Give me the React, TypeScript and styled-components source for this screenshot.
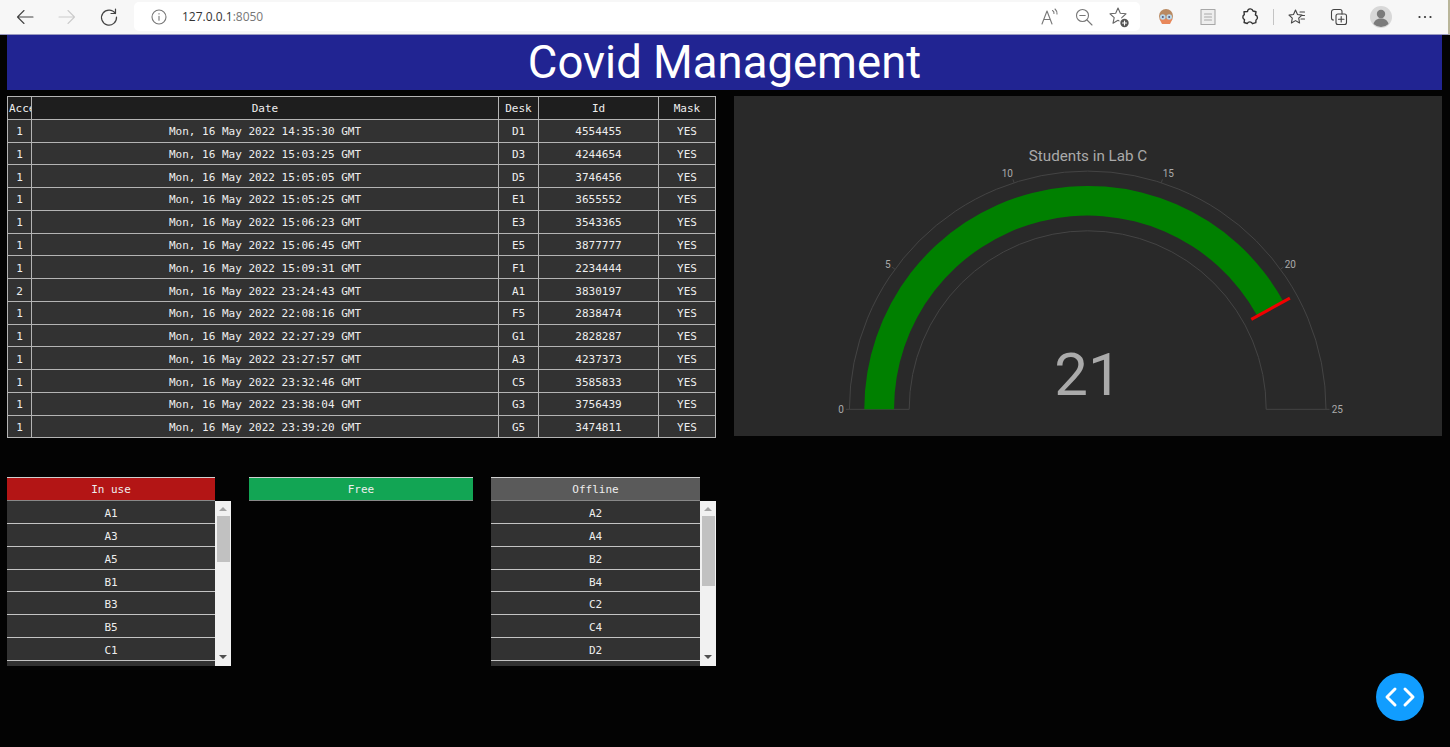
import React from 'react';
import styled, {createGlobalStyle} from 'styled-components';

const GlobalStyle = createGlobalStyle`
    html, body {
        margin: 0;
        padding: 0;
        height: 100%;
        background: #030303;
        overflow: hidden;
    }
    #root {
        height: 100%;
    }
`

type LogRow = [string, string, string, string]

const logRows: LogRow[] = [
    ['1', 'Mon, 16 May 2022 14:35:30 GMT', 'D1', '4554455'],
    ['1', 'Mon, 16 May 2022 15:03:25 GMT', 'D3', '4244654'],
    ['1', 'Mon, 16 May 2022 15:05:05 GMT', 'D5', '3746456'],
    ['1', 'Mon, 16 May 2022 15:05:25 GMT', 'E1', '3655552'],
    ['1', 'Mon, 16 May 2022 15:06:23 GMT', 'E3', '3543365'],
    ['1', 'Mon, 16 May 2022 15:06:45 GMT', 'E5', '3877777'],
    ['1', 'Mon, 16 May 2022 15:09:31 GMT', 'F1', '2234444'],
    ['2', 'Mon, 16 May 2022 23:24:43 GMT', 'A1', '3830197'],
    ['1', 'Mon, 16 May 2022 22:08:16 GMT', 'F5', '2838474'],
    ['1', 'Mon, 16 May 2022 22:27:29 GMT', 'G1', '2828287'],
    ['1', 'Mon, 16 May 2022 23:27:57 GMT', 'A3', '4237373'],
    ['1', 'Mon, 16 May 2022 23:32:46 GMT', 'C5', '3585833'],
    ['1', 'Mon, 16 May 2022 23:38:04 GMT', 'G3', '3756439'],
    ['1', 'Mon, 16 May 2022 23:39:20 GMT', 'G5', '3474811'],
]

const inUse = ['A1', 'A3', 'A5', 'B1', 'B3', 'B5', 'C1', 'C3', 'C5', 'D1', 'D3', 'D5', 'E1', 'E3', 'E5', 'F1', 'F3', 'F5', 'G1', 'G3', 'G5']
const offline = ['A2', 'A4', 'B2', 'B4', 'C2', 'C4', 'D2', 'D4', 'E2', 'E4', 'F2', 'F4', 'G2', 'G4']

const Toolbar = styled.div`
    height: 35px;
    padding-bottom: 1px;
    box-sizing: border-box;
    background: #f7f7f7;
    border-bottom: 1px solid #9a9ac0;
    border-right: 2px solid #b9b69a;
    display: flex;
    align-items: center;
    color: #444;
`

const NavGroup = styled.div`
    width: 134px;
    flex: none;
    display: flex;
    align-items: center;
    padding-left: 13px;
    gap: 18px;
    box-sizing: border-box;
`

const ToolIcon = styled.svg<{$tone?: string; $weight?: number}>`
    width: 24px;
    height: 24px;
    flex: none;
    fill: none;
    stroke: ${props => props.$tone || '#555'};
    stroke-width: ${props => props.$weight || 1.1};
    stroke-linecap: round;
    stroke-linejoin: round;
`

const AddressBar = styled.div`
    width: 1006px;
    height: 29px;
    flex: none;
    background: #fff;
    border-radius: 5px;
    display: flex;
    align-items: center;
    padding: 0 9px 0 13px;
    box-sizing: border-box;
`

const Url = styled.div`
    margin-left: 11px;
    font: 12px "Open Sans", sans-serif;
    color: #333;
    flex: 1;
    span {
        color: #777;
    }
`

const AddressActions = styled.div`
    display: flex;
    align-items: center;
    gap: 11px;
`

const ToolGroup = styled.div`
    flex: 1;
    display: flex;
    align-items: center;
    padding-left: 14px;
    gap: 18px;
`

const Separator = styled.div`
    width: 1px;
    height: 16px;
    background: #c4c4c4;
    margin: 0 -7px;
`

const Page = styled.div`
    padding: 0 8px 0 7px;
`

const Banner = styled.h1`
    margin: 0;
    height: 55px;
    background: #212492;
    color: #fff;
    font: 400 45.5px/56px Roboto, sans-serif;
    text-align: center;
`

const TopRow = styled.div`
    margin-top: 6px;
    display: grid;
    grid-template-columns: 709px 708px;
    column-gap: 18px;
    align-items: start;
`

const LogTable = styled.table`
    width: 708px;
    table-layout: fixed;
    border-collapse: collapse;
    font: 11px "DejaVu Sans Mono", monospace;
    color: #eee;
`

const HeadCell = styled.th`
    height: 22.78px;
    padding: 2px 0 0;
    background: #1e1e1e;
    border: 1px solid #b4b4b4;
    font-weight: 400;
    text-align: center;
    overflow: hidden;
    white-space: nowrap;
    box-sizing: border-box;
`

const ClippedHeadCell = styled(HeadCell)`
    text-align: left;
    padding-left: 1px;
`

const BodyCell = styled.td`
    height: 22.78px;
    padding: 2px 0 0;
    background: #323232;
    border: 1px solid #b4b4b4;
    text-align: center;
    box-sizing: border-box;
`

const GaugePanel = styled.div`
    height: 340px;
    background: #292929;
`

const GaugeSvg = styled.svg`
    display: block;
    width: 708px;
    height: 340px;
    font-family: Roboto, sans-serif;
    fill: #aaa;
`

const BottomRow = styled.div`
    margin-top: 39px;
    display: grid;
    grid-template-columns: 224px 224px 225px;
    column-gap: 18px;
    align-items: start;
`

const StatusColumn = styled.div`
    font: 11px "DejaVu Sans Mono", monospace;
    color: #eee;
`

const StatusHead = styled.div<{$bg: string; $narrow?: boolean}>`
    height: 24px;
    width: ${props => props.$narrow ? 'calc(100% - 16px)' : '100%'};
    background: ${props => props.$bg};
    border-top: 1px solid #d0d0d0;
    border-bottom: 1px solid #888;
    box-sizing: border-box;
    line-height: 23px;
    text-align: center;
`

const ListFrame = styled.div`
    display: flex;
    height: 165px;
`

const ListRows = styled.div`
    flex: 1;
    overflow: hidden;
`

const ListRow = styled.div`
    height: 22.75px;
    box-sizing: border-box;
    background: #323232;
    border-bottom: 1px solid #c4c4c4;
    line-height: 25px;
    text-align: center;
`

const ScrollBar = styled.div`
    width: 16px;
    flex: none;
    background: #f1f1f1;
    display: flex;
    flex-direction: column;
    align-items: center;
`

const ScrollArrow = styled.div<{$down?: boolean}>`
    width: 0;
    height: 0;
    flex: none;
    margin: ${props => props.$down ? 'auto 0 7px' : '6px 0 5px'};
    border-left: 4px solid transparent;
    border-right: 4px solid transparent;
    border-bottom: ${props => props.$down ? '0' : '4px solid #a3a3a3'};
    border-top: ${props => props.$down ? '4px solid #505050' : '0'};
`

const ScrollThumb = styled.div`
    width: 13px;
    flex: none;
    background: #c1c1c1;
`

const CodeButton = styled.div`
    position: fixed;
    left: 1376px;
    top: 673px;
    width: 48px;
    height: 48px;
    border-radius: 50%;
    background: #119dff;
    display: flex;
    align-items: center;
    justify-content: center;
`

const CX = 353.7
const CY = 313.3

// angle in degrees of the gauge: 0 is the left end, 180 the right end
const polar = (r: number, deg: number) => {
    const a = deg * Math.PI / 180
    return `${(CX - r * Math.cos(a)).toFixed(2)} ${(CY - r * Math.sin(a)).toFixed(2)}`
}

const band = (outer: number, inner: number, deg: number) =>
    `M${polar(outer, 0)} A${outer} ${outer} 0 0 1 ${polar(outer, deg)} L${polar(inner, deg)} A${inner} ${inner} 0 0 0 ${polar(inner, 0)} Z`

const tickLabels: [string, number, number][] = [
    ['0', 107, 313.3],
    ['5', 153.7, 168.3],
    ['10', 273.3, 77.3],
    ['15', 434.3, 77.3],
    ['20', 556.3, 168.3],
    ['25', 603.3, 313.3],
]

const Gauge = () => {
    const value = 21 / 25 * 180
    return (
        <GaugePanel>
            <GaugeSvg viewBox="0 0 708 340">
                <text x={354} y={65} fontSize={15.2} textAnchor="middle">Students in Lab C</text>
                <path d={band(238.3, 178.5, 180)} fill="none" stroke="#444" strokeWidth={1}/>
                {[0, 36, 72, 108, 144, 180].map(deg => (
                    <path key={deg} d={`M${polar(238.3, deg)} L${polar(241.8, deg)}`} stroke="#444" strokeWidth={1}/>
                ))}
                <path d={band(223.4, 193.7, value)} fill="#008000"/>
                <path d={`M${polar(186.7, value)} L${polar(230.7, value)}`} stroke="#f00000" strokeWidth={3}/>
                {tickLabels.map(([label, x, y]) => (
                    <text key={label} x={x} y={y} dy="0.35em" fontSize={10} textAnchor="middle">{label}</text>
                ))}
                <text x={354} y={299} fontSize={60} textAnchor="middle">21</text>
            </GaugeSvg>
        </GaugePanel>
    )
}

const StatusList = ({rows, thumb}: {rows: string[]; thumb: number}) => (
    <ListFrame>
        <ListRows>
            {rows.map(row => <ListRow key={row}>{row}</ListRow>)}
        </ListRows>
        <ScrollBar>
            <ScrollArrow/>
            <ScrollThumb style={{height: thumb}}/>
            <ScrollArrow $down/>
        </ScrollBar>
    </ListFrame>
)

const BrowserBar = () => (
    <Toolbar>
        <NavGroup>
            <ToolIcon viewBox="0 0 24 24" $tone="#444"><path d="M20 12H4.500M11 5.500 4.500 12l6.500 6.500"/></ToolIcon>
            <ToolIcon viewBox="0 0 24 24" $tone="#ccc"><path d="M4 12h15.500M13 5.500l6.500 6.500-6.500 6.500"/></ToolIcon>
            <ToolIcon viewBox="0 0 24 24" $tone="#444" $weight={1.2}><path d="M18.300 8.500A7.500 7.500 0 1 0 19.500 12M18.500 4v4.500H14"/></ToolIcon>
        </NavGroup>
        <AddressBar>
            <ToolIcon viewBox="0 0 24 24" $tone="#777"><circle cx="12" cy="12" r="7"/><path d="M12 11.200v4M12 8.600v.3"/></ToolIcon>
            <Url>127.0.0.1<span>:8050</span></Url>
            <AddressActions>
                <ToolIcon viewBox="0 0 24 24" $tone="#777">
                    <path d="M5 19 10 6l5 13M6.800 14.500h6.400M15.500 5.500a3 3 0 0 1 1.500 3M18 4a6 6 0 0 1 2 5"/>
                </ToolIcon>
                <ToolIcon viewBox="0 0 24 24" $tone="#777"><circle cx="10.500" cy="10.500" r="6"/><path d="M7.800 10.500h5.400M15 15l5 5"/></ToolIcon>
                <ToolIcon viewBox="0 0 24 24" $tone="#666">
                    <path d="M11 3l2.300 5.200 5.700.6-4.200 3.800 1.200 5.600-5-2.900-5 2.900 1.200-5.600L3 8.800l5.700-.6z"/>
                    <circle cx="17.500" cy="18" r="5.500" fill="#fff" stroke="none"/>
                    <circle cx="17.500" cy="18" r="4.200" fill="#555" stroke="none"/>
                    <path d="M15.500 18h4M17.500 16v4" stroke="#fff"/>
                </ToolIcon>
            </AddressActions>
        </AddressBar>
        <ToolGroup>
            <ToolIcon viewBox="0 0 24 24" style={{stroke: 'none'}}>
                <circle cx="12" cy="11" r="7" fill="#b98a62"/>
                <path d="M5.500 14h13l-2.500 5H8z" fill="#e8875a"/>
                <circle cx="8.800" cy="12" r="2.800" fill="#bcd7e8"/>
                <circle cx="15.200" cy="12" r="2.800" fill="#bcd7e8"/>
                <circle cx="8.800" cy="12" r="1" fill="#557"/>
                <circle cx="15.200" cy="12" r="1" fill="#557"/>
            </ToolIcon>
            <ToolIcon viewBox="0 0 24 24" $tone="#a8a8a8"><rect x="5" y="4.500" width="14" height="15" fill="#eee"/><path d="M8.500 9h7M8.500 12h7M8.500 15h7"/></ToolIcon>
            <ToolIcon viewBox="0 0 24 24" $tone="#333" $weight={1.4}>
                <path d="M9.500 6.500a2.800 2.800 0 0 1 5.500-.5l3 .8-.6 3.200a2.700 2.700 0 0 1 .6 5l-.2 2.700-3.300 1a2.800 2.800 0 0 0-5.200-.2l-3.200-1 .4-2.800a2.800 2.800 0 0 1-.2-5l-.3-2.900z"/>
            </ToolIcon>
            <Separator/>
            <ToolIcon viewBox="0 0 24 24" $tone="#444">
                <path d="m10.500 5 2 4.500 4.500.6-3.300 3.100.9 4.800-4.100-2.400-4.100 2.400.9-4.800L4 10.100l4.500-.6zM15 7h4.500M17 10.500h2.500M16 14h3.500"/>
            </ToolIcon>
            <ToolIcon viewBox="0 0 24 24" $tone="#444">
                <rect x="9" y="9" width="10.500" height="10.500" rx="2"/>
                <path d="M6.500 15a2 2 0 0 1-2-2V7a2.500 2.500 0 0 1 2.500-2.500h6a2 2 0 0 1 2 2V9M14.200 11.500v5.500M11.500 14.200H17"/>
            </ToolIcon>
            <ToolIcon viewBox="0 0 24 24" style={{stroke: 'none'}}>
                <circle cx="12" cy="12" r="11" fill="#d8d8d8"/>
                <circle cx="12" cy="9" r="4.200" fill="#7b7b7b"/>
                <path d="M4.500 19c1-4 4-5.500 7.500-5.500s6.500 1.500 7.500 5.500a11 11 0 0 1-15 0z" fill="#7b7b7b"/>
            </ToolIcon>
            <ToolIcon viewBox="0 0 24 24" style={{stroke: 'none', fill: '#333'}}>
                <circle cx="8.500" cy="12" r="1.100"/>
                <circle cx="14" cy="12" r="1.100"/>
                <circle cx="19.500" cy="12" r="1.100"/>
            </ToolIcon>
        </ToolGroup>
    </Toolbar>
)

export default function App() {
    return (
        <>
            <GlobalStyle/>
            <BrowserBar/>
            <Page>
                <Banner>Covid Management</Banner>
                <TopRow>
                    <LogTable>
                        <colgroup>
                            <col style={{width: 24}}/>
                            <col style={{width: 467}}/>
                            <col style={{width: 40}}/>
                            <col style={{width: 120}}/>
                            <col style={{width: 57}}/>
                        </colgroup>
                        <thead>
                            <tr>
                                <ClippedHeadCell>Accesses</ClippedHeadCell>
                                <HeadCell>Date</HeadCell>
                                <HeadCell>Desk</HeadCell>
                                <HeadCell>Id</HeadCell>
                                <HeadCell>Mask</HeadCell>
                            </tr>
                        </thead>
                        <tbody>
                            {logRows.map(([count, date, desk, id]) => (
                                <tr key={date}>
                                    <BodyCell>{count}</BodyCell>
                                    <BodyCell>{date}</BodyCell>
                                    <BodyCell>{desk}</BodyCell>
                                    <BodyCell>{id}</BodyCell>
                                    <BodyCell>YES</BodyCell>
                                </tr>
                            ))}
                        </tbody>
                    </LogTable>
                    <Gauge/>
                </TopRow>
                <BottomRow>
                    <StatusColumn>
                        <StatusHead $bg="#b31515" $narrow>In use</StatusHead>
                        <StatusList rows={inUse} thumb={46}/>
                    </StatusColumn>
                    <StatusColumn>
                        <StatusHead $bg="#12a554">Free</StatusHead>
                    </StatusColumn>
                    <StatusColumn>
                        <StatusHead $bg="#5a5a5a" $narrow>Offline</StatusHead>
                        <StatusList rows={offline} thumb={70}/>
                    </StatusColumn>
                </BottomRow>
            </Page>
            <CodeButton>
                <svg width="34" height="24" viewBox="0 0 34 24" fill="none" stroke="#fff" strokeWidth="3" strokeLinecap="round" strokeLinejoin="round">
                    <path d="M12 4 4 12l8 8M22 4l8 8-8 8"/>
                </svg>
            </CodeButton>
        </>
    )
}
